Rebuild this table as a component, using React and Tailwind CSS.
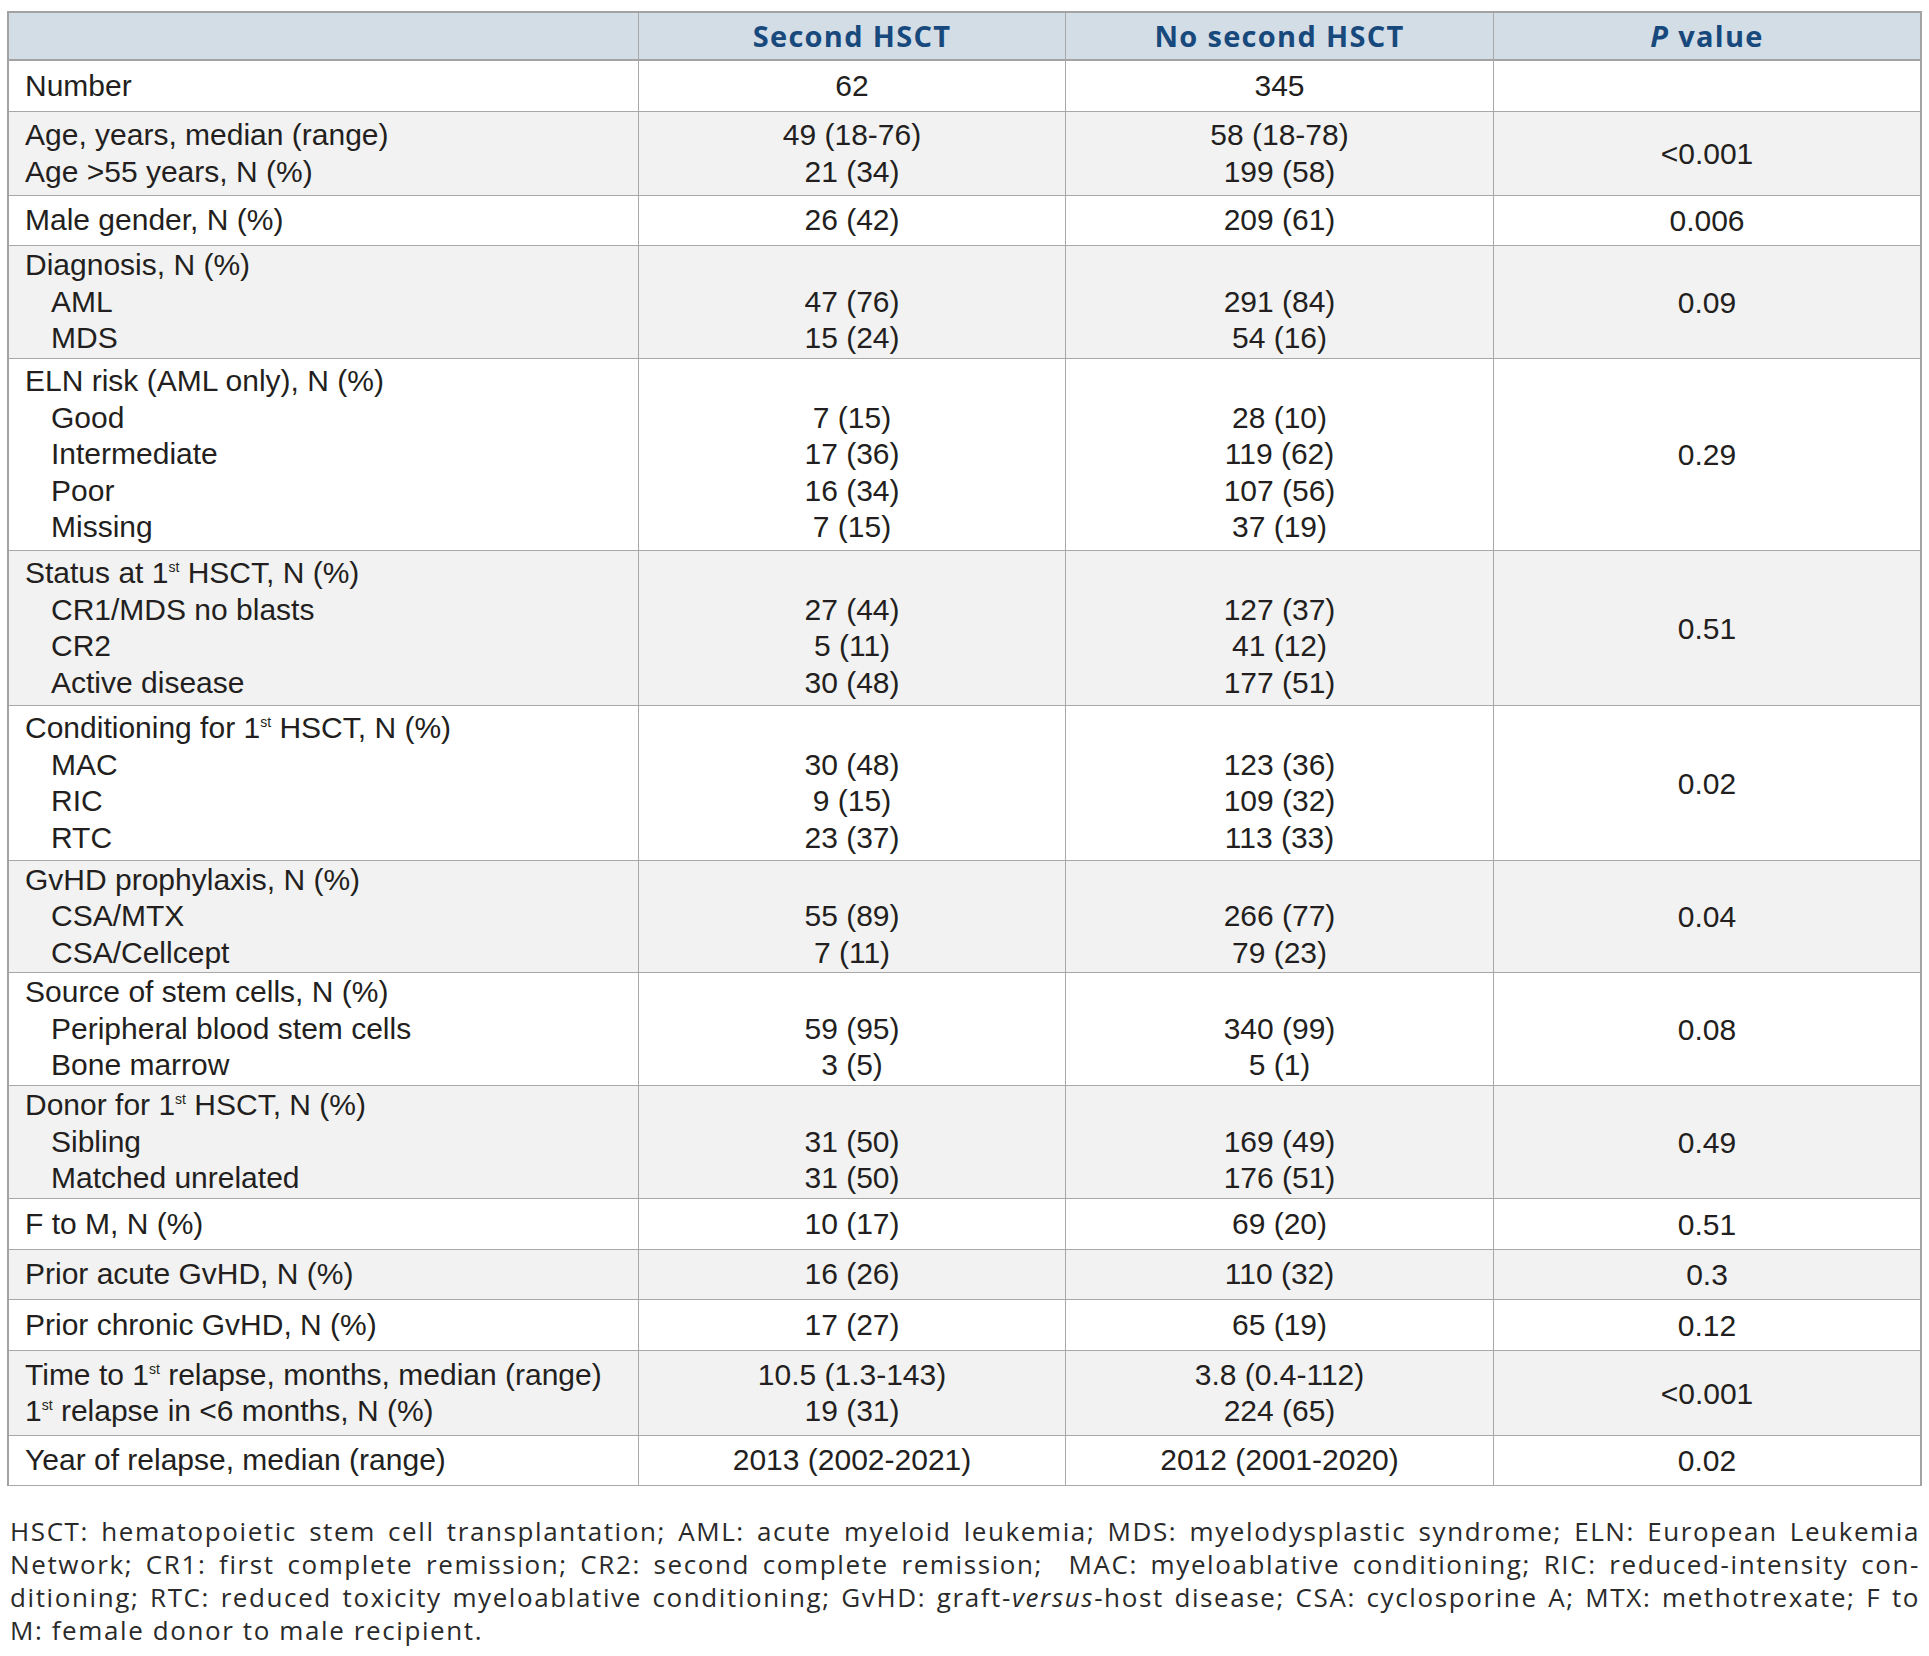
import React from 'react';

const St = () => (
    <span className="relative -top-[11px] text-[14px] leading-none">st</span>
);

// row heights are taken straight from the source table (they are not uniform)
const rows = [
    { h: 'h-[51px]', bg: 'bg-white', label: ['Number'], a: ['62'], b: ['345'], p: '' },
    {
        h: 'h-[84px]', bg: 'bg-[#f2f2f2]',
        label: ['Age, years, median (range)', 'Age >55 years, N (%)'],
        a: ['49 (18-76)', '21 (34)'], b: ['58 (18-78)', '199 (58)'], p: '<0.001',
    },
    { h: 'h-[50px]', bg: 'bg-white', label: ['Male gender, N (%)'], a: ['26 (42)'], b: ['209 (61)'], p: '0.006' },
    {
        h: 'h-[113px]', bg: 'bg-[#f2f2f2]', sub: true,
        label: ['Diagnosis, N (%)', 'AML', 'MDS'],
        a: ['', '47 (76)', '15 (24)'], b: ['', '291 (84)', '54 (16)'], p: '0.09',
    },
    {
        h: 'h-[192px]', bg: 'bg-white', sub: true,
        label: ['ELN risk (AML only), N (%)', 'Good', 'Intermediate', 'Poor', 'Missing'],
        a: ['', '7 (15)', '17 (36)', '16 (34)', '7 (15)'],
        b: ['', '28 (10)', '119 (62)', '107 (56)', '37 (19)'], p: '0.29',
    },
    {
        h: 'h-[155px]', bg: 'bg-[#f2f2f2]', sub: true,
        label: [<>Status at 1<St /> HSCT, N (%)</>, 'CR1/MDS no blasts', 'CR2', 'Active disease'],
        a: ['', '27 (44)', '5 (11)', '30 (48)'],
        b: ['', '127 (37)', '41 (12)', '177 (51)'], p: '0.51',
    },
    {
        h: 'h-[155px]', bg: 'bg-white', sub: true,
        label: [<>Conditioning for 1<St /> HSCT, N (%)</>, 'MAC', 'RIC', 'RTC'],
        a: ['', '30 (48)', '9 (15)', '23 (37)'],
        b: ['', '123 (36)', '109 (32)', '113 (33)'], p: '0.02',
    },
    {
        h: 'h-[112px]', bg: 'bg-[#f2f2f2]', sub: true,
        label: ['GvHD prophylaxis, N (%)', 'CSA/MTX', 'CSA/Cellcept'],
        a: ['', '55 (89)', '7 (11)'], b: ['', '266 (77)', '79 (23)'], p: '0.04',
    },
    {
        h: 'h-[113px]', bg: 'bg-white', sub: true,
        label: ['Source of stem cells, N (%)', 'Peripheral blood stem cells', 'Bone marrow'],
        a: ['', '59 (95)', '3 (5)'], b: ['', '340 (99)', '5 (1)'], p: '0.08',
    },
    {
        h: 'h-[113px]', bg: 'bg-[#f2f2f2]', sub: true,
        label: [<>Donor for 1<St /> HSCT, N (%)</>, 'Sibling', 'Matched unrelated'],
        a: ['', '31 (50)', '31 (50)'], b: ['', '169 (49)', '176 (51)'], p: '0.49',
    },
    { h: 'h-[51px]', bg: 'bg-white', label: ['F to M, N (%)'], a: ['10 (17)'], b: ['69 (20)'], p: '0.51' },
    { h: 'h-[50px]', bg: 'bg-[#f2f2f2]', label: ['Prior acute GvHD, N (%)'], a: ['16 (26)'], b: ['110 (32)'], p: '0.3' },
    { h: 'h-[51px]', bg: 'bg-white', label: ['Prior chronic GvHD, N (%)'], a: ['17 (27)'], b: ['65 (19)'], p: '0.12' },
    {
        h: 'h-[85px]', bg: 'bg-[#f2f2f2]',
        label: [<>Time to 1<St /> relapse, months, median (range)</>, <>1<St /> relapse in &lt;6 months, N (%)</>],
        a: ['10.5 (1.3-143)', '19 (31)'], b: ['3.8 (0.4-112)', '224 (65)'], p: '<0.001',
    },
    {
        h: 'h-[50px]', bg: 'bg-white', label: ['Year of relapse, median (range)'],
        a: ['2013 (2002-2021)'], b: ['2012 (2001-2020)'], p: '0.02',
    },
];

const Lines = ({ items }) => (
    <>
        {items.map((t, i) => (
            <div key={i} className="leading-[36.5px] h-[36.5px] whitespace-nowrap">
                {t === '' ? '\u00a0' : t}
            </div>
        ))}
    </>
);

const App = () => {
    return (
        <div className="min-h-screen bg-white pt-[11px] text-[#231f20]">
            {/* Table */}
            <div className="ml-[7px] w-[1915px] border-x-2 border-[#a3a3a3] font-[family-name:'Liberation_Sans',Arial,Helvetica,sans-serif] text-[30px]">
                {/* Header */}
                <div className="grid grid-cols-[630px_427px_428px_1fr] h-[50px] bg-[#d3dde6] border-y-2 border-[#a3a3a3] font-[family-name:'Open_Sans',sans-serif] font-bold text-[29px] tracking-[1.3px] text-[#18497c]">
                    <div className="border-r border-[#a8a8a8]"></div>
                    <div className="border-r border-[#a8a8a8] flex items-center justify-center">Second HSCT</div>
                    <div className="border-r border-[#a8a8a8] flex items-center justify-center">No second HSCT</div>
                    <div className="flex items-center justify-center">
                        <span className="italic mr-[9px]">P</span>value
                    </div>
                </div>

                {/* Body */}
                {rows.map((row, idx) => (
                    <div
                        key={idx}
                        className={`grid grid-cols-[630px_427px_428px_1fr] border-b border-[#a8a8a8] ${row.h} ${row.bg}`}
                    >
                        <div className="border-r border-[#a8a8a8] flex flex-col justify-center pl-[16px]">
                            {row.label.map((t, i) => (
                                <div
                                    key={i}
                                    className={`leading-[36.5px] h-[36.5px] whitespace-nowrap ${row.sub && i > 0 ? 'pl-[26px]' : ''}`}
                                >
                                    {t}
                                </div>
                            ))}
                        </div>
                        <div className="border-r border-[#a8a8a8] flex flex-col justify-center text-center">
                            <Lines items={row.a} />
                        </div>
                        <div className="border-r border-[#a8a8a8] flex flex-col justify-center text-center">
                            <Lines items={row.b} />
                        </div>
                        <div className="flex items-center justify-center">{row.p}</div>
                    </div>
                ))}
            </div>

            {/* Footnote */}
            <div className="ml-[10px] w-[1910px] mt-[29px] font-[family-name:'Open_Sans',sans-serif] text-[26px] leading-[33px] tracking-[1.6px] text-[#2a2a2a]">
                <div className="text-justify [text-align-last:justify]">
                    HSCT: hematopoietic stem cell transplantation; AML: acute myeloid leukemia; MDS: myelodysplastic syndrome; ELN: European Leukemia
                </div>
                <div className="text-justify [text-align-last:justify]">
                    Network; CR1: first complete remission; CR2: second complete remission;&nbsp; MAC: myeloablative conditioning; RIC: reduced-intensity con-
                </div>
                <div className="text-justify [text-align-last:justify]">
                    ditioning; RTC: reduced toxicity myeloablative conditioning; GvHD: graft-<i>versus</i>-host disease; CSA: cyclosporine A; MTX: methotrexate; F to
                </div>
                <div>M: female donor to male recipient.</div>
            </div>
        </div>
    );
};

export default App;
